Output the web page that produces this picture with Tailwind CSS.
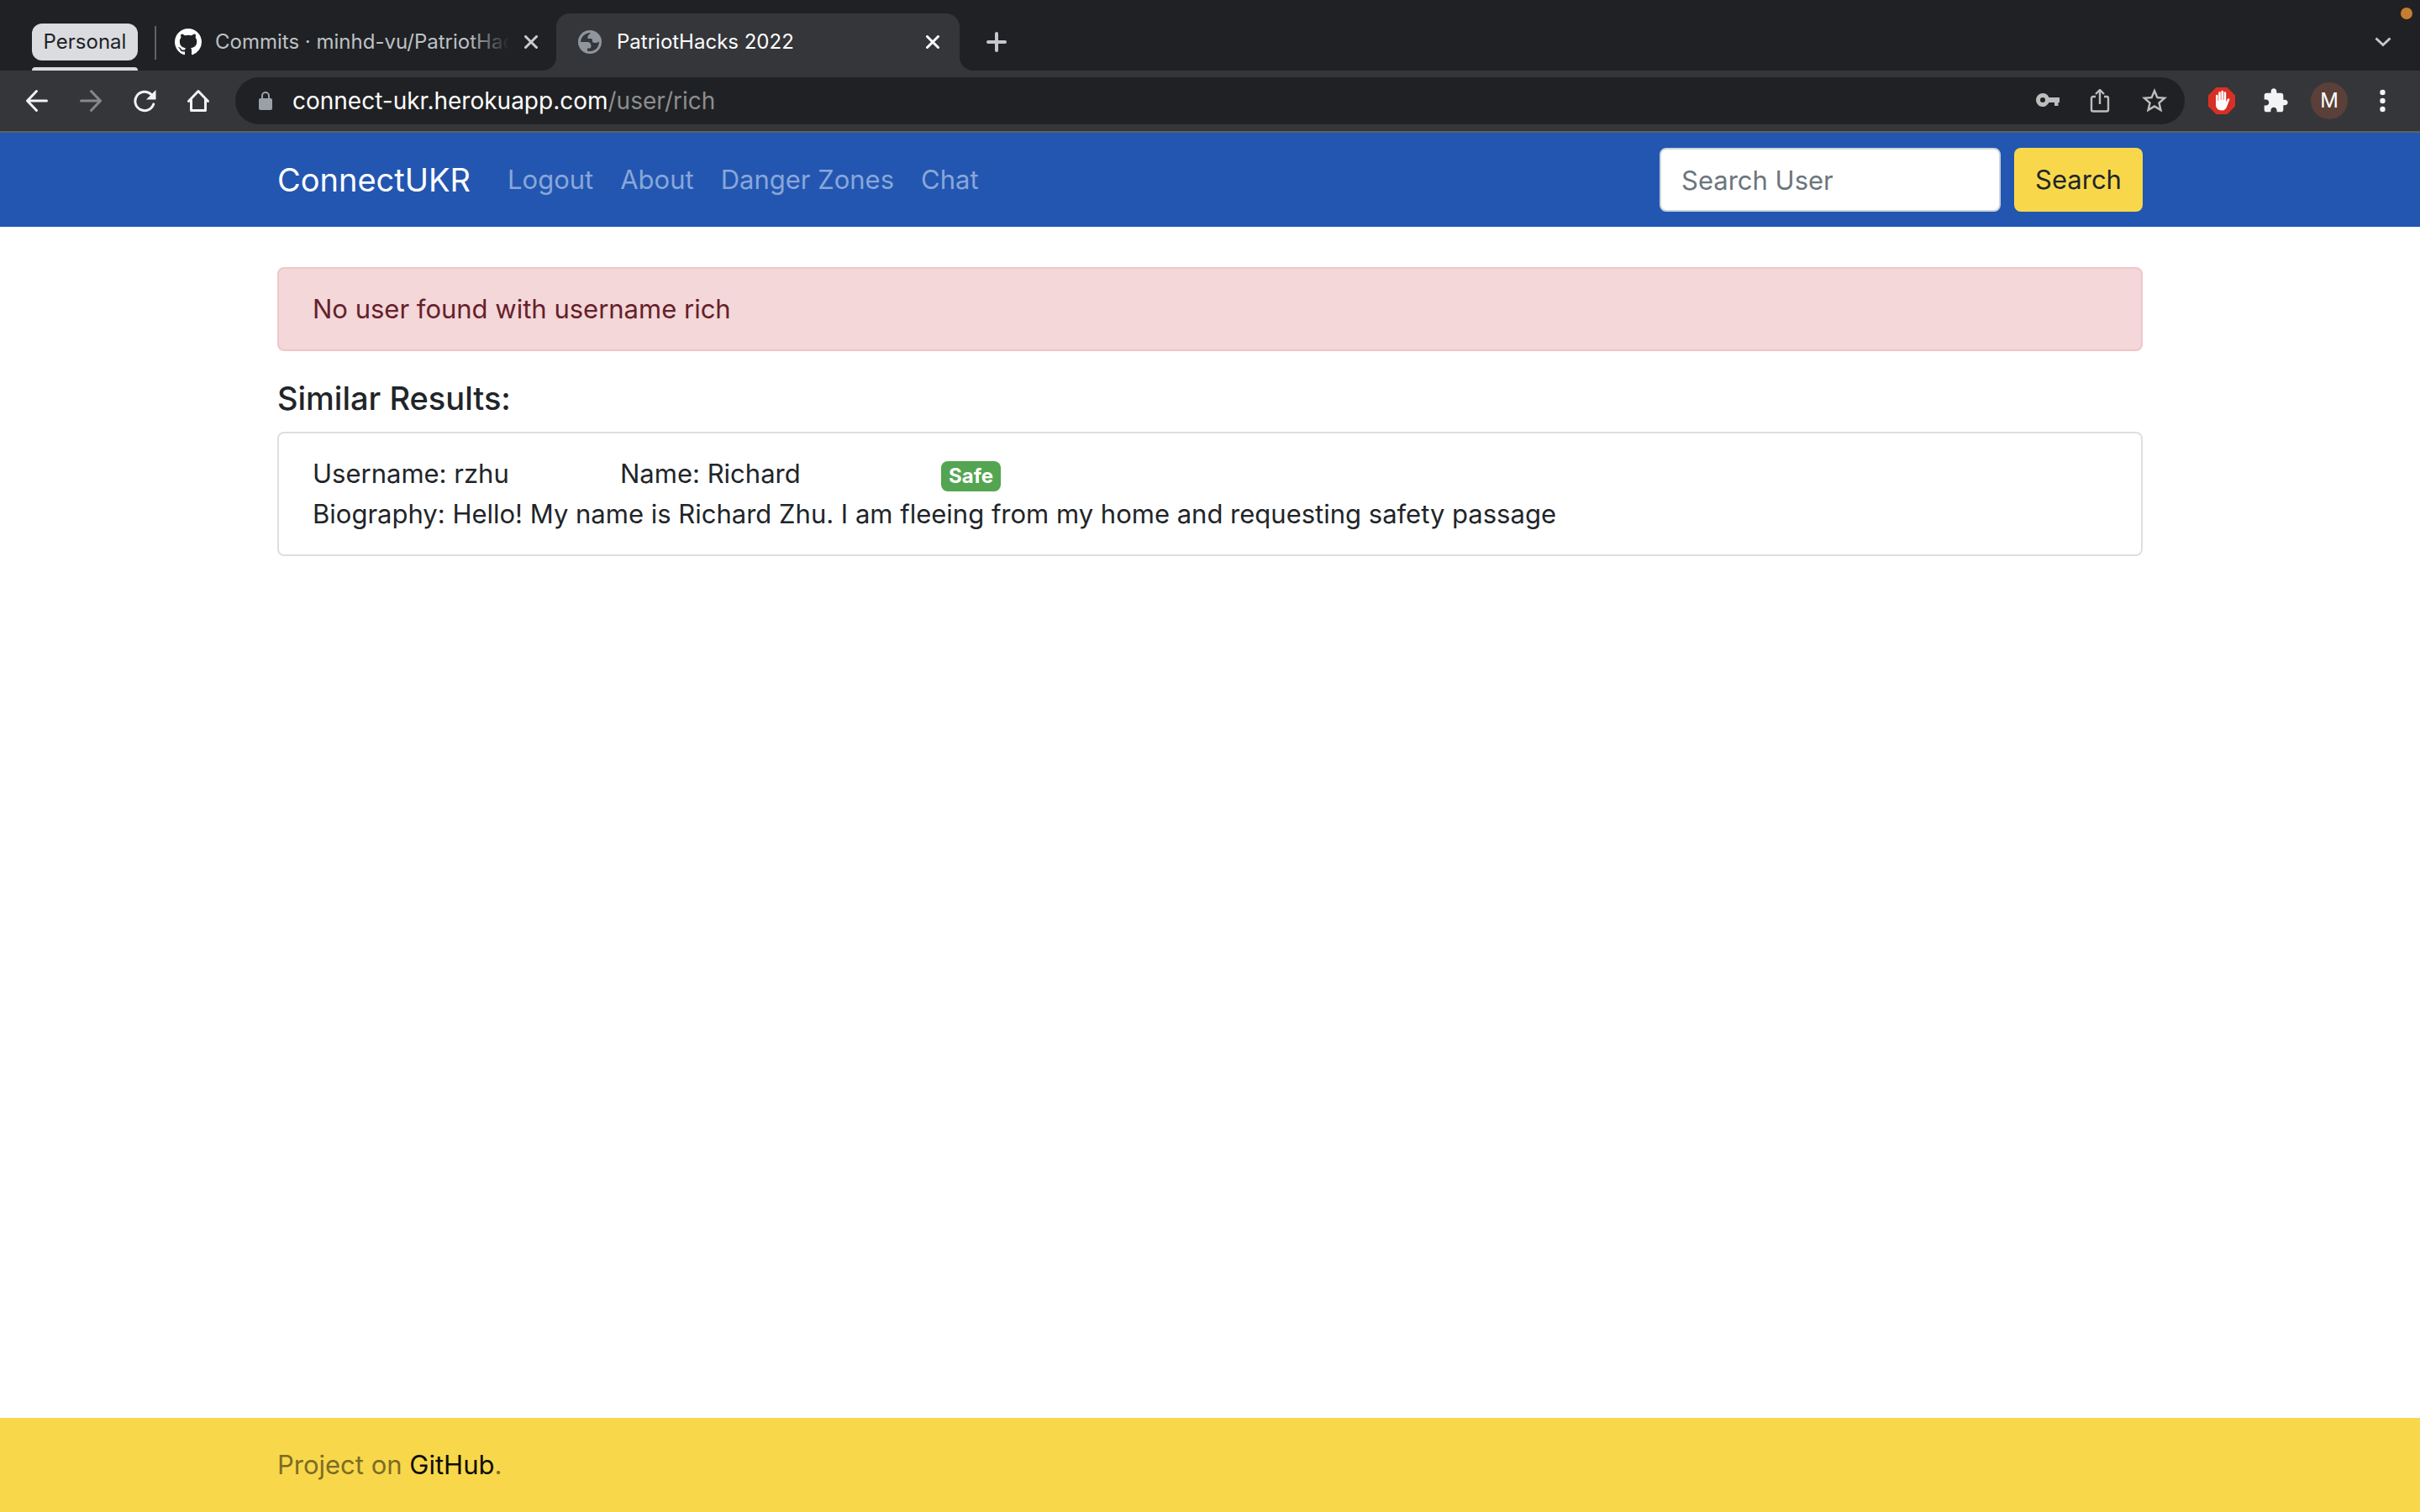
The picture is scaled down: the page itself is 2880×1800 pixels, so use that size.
<!DOCTYPE html>
<html lang="en">
<head>
    <meta charset="UTF-8">
    <meta name="viewport" content="width=device-width, initial-scale=1.0">
    <title>PatriotHacks 2022</title>
    <script src="https://cdn.jsdelivr.net/npm/@tailwindcss/browser@4"></script>
</head>
<body class="flex min-h-screen flex-col bg-white font-['Inter','Liberation_Sans',sans-serif] text-[31px] leading-[48px] text-[#212529]">

    <!-- Browser window -->
    <div class="text-[24px] leading-[32px]">

        <!-- Tab strip -->
        <div class="relative flex h-[84px] bg-[#202124]">
            <div class="ml-[38px] flex w-[126px] flex-col justify-between pt-7">
                <button class="h-11 rounded-xl bg-[#dadce0] text-[#202124]">Personal</button>
                <div class="h-1 rounded-t bg-[#dadce0]"></div>
            </div>
            <div class="ml-5 mt-[31px] h-10 w-[2px] bg-[#5f6368]"></div>

            <div class="ml-[22px] mr-[22px] flex items-center pt-4">
                <svg class="size-8 shrink-0" viewBox="0 0 16 16" fill="#fff"><path d="M8 0C3.58 0 0 3.58 0 8c0 3.54 2.29 6.53 5.47 7.59.4.07.55-.17.55-.38 0-.19-.01-.82-.01-1.49-2.01.37-2.53-.49-2.69-.94-.09-.23-.48-.94-.82-1.13-.28-.15-.68-.52-.01-.53.63-.01 1.08.58 1.23.82.72 1.21 1.87.87 2.33.66.07-.52.28-.87.51-1.07-1.78-.2-3.64-.89-3.64-3.95 0-.87.31-1.59.82-2.15-.08-.2-.36-1.02.08-2.12 0 0 .67-.21 2.2.82.64-.18 1.32-.27 2-.27s1.36.09 2 .27c1.53-1.04 2.2-.82 2.2-.82.44 1.1.16 1.92.08 2.12.51.56.82 1.27.82 2.15 0 3.07-1.87 3.75-3.65 3.95.29.25.54.73.54 1.48 0 1.07-.01 1.93-.01 2.2 0 .21.15.46.55.38A8.01 8.01 0 0 0 16 8c0-4.42-3.58-8-8-8z"/></svg>
                <span class="relative ml-4 w-[350px] overflow-hidden whitespace-nowrap text-[#bdc1c6]">Commits · minhd-vu/PatriotHac
                    <span class="absolute inset-y-0 right-0 w-12 bg-linear-to-r from-[#202124]/0 to-[#202124]"></span>
                </span>
                <button class="ml-[18px]" aria-label="Close tab">
                    <svg class="size-4" viewBox="0 0 16 16" stroke="#c9ccd0" stroke-width="3" stroke-linecap="round"><path d="M1.5 1.5l13 13M14.5 1.5l-13 13"/></svg>
                </button>
            </div>

            <div class="relative mt-4 flex w-[480px] items-center rounded-t-[16px] bg-[#35363a] pl-[26px] pr-6">
                <div class="absolute -left-4 bottom-0 size-4 bg-[#35363a]"><div class="size-4 rounded-br-[16px] bg-[#202124]"></div></div>
                <div class="absolute -right-4 bottom-0 size-4 bg-[#35363a]"><div class="size-4 rounded-bl-[16px] bg-[#202124]"></div></div>
                <svg class="size-7" viewBox="0 0 28 28"><circle cx="14" cy="14" r="14" fill="#8f959c"/><path fill="#35363a" d="M3 14C3.3 8 8 3.2 15 3C14 5 12 5 11.5 7.5V10H15.5C17 10 17 12 17 14C19 16 22 15 25 13.5C25 20 20.5 25 14 25L11 24.7V21.5H14.5C16 20 15.5 17 14.5 15.5C13.5 14 12 14 10 14Z"/></svg>
                <span class="ml-[18px] text-white">PatriotHacks 2022</span>
                <button class="ml-auto" aria-label="Close tab">
                    <svg class="size-4" viewBox="0 0 16 16" stroke="#fff" stroke-width="3" stroke-linecap="round"><path d="M1.5 1.5l13 13M14.5 1.5l-13 13"/></svg>
                </button>
            </div>

            <button class="ml-8 pt-4" aria-label="New tab">
                <svg class="size-6" viewBox="0 0 24 24" stroke="#c4c7cb" stroke-width="4" stroke-linecap="round"><path d="M12 2v20M2 12h20"/></svg>
            </button>
            <button class="ml-auto mr-[34px] pt-4" aria-label="Search tabs">
                <svg class="h-3 w-5" viewBox="0 0 20 12" fill="none" stroke="#c4c7cb" stroke-width="3"><path d="M1.5 1.5l8.5 8 8.5-8"/></svg>
            </button>
            <span class="absolute right-[9px] top-[9px] size-[14px] rounded-full bg-[#c57e30]"></span>
        </div>

        <!-- Toolbar -->
        <div class="flex h-[74px] items-center border-b-2 border-[#5f6063] bg-[#35363a] pl-[30px] pr-[41px]">
            <div class="flex items-center gap-9">
                <button aria-label="Back"><svg class="size-7" viewBox="0 0 28 28" fill="none" stroke="#f1f3f4" stroke-width="3" stroke-linecap="round" stroke-linejoin="round"><path d="M25.5 14H3M13.5 2.5L2.5 14l11 11.5"/></svg></button>
                <button aria-label="Forward"><svg class="size-7" viewBox="0 0 28 28" fill="none" stroke="#87888a" stroke-width="3" stroke-linecap="round" stroke-linejoin="round"><path d="M2.5 14H25M14.5 2.5l11 11.5-11 11.5"/></svg></button>
                <button aria-label="Reload"><svg class="size-7" viewBox="0 0 28 28"><path fill="none" stroke="#f1f3f4" stroke-width="3" stroke-linecap="round" d="M22 6.5A11.2 11.2 0 1 0 24.7 18"/><path fill="#f1f3f4" d="M27.5 1v11.5H16z"/></svg></button>
                <button aria-label="Home"><svg class="size-7" viewBox="0 0 28 28" fill="none" stroke="#f1f3f4" stroke-width="3" stroke-linecap="round" stroke-linejoin="round"><path d="M2.5 14.5L14 2.5l11.5 12M5.5 12v13.5h17V12"/></svg></button>
            </div>

            <div class="ml-[30px] flex h-14 grow items-center rounded-full bg-[#202124] pl-7 pr-[18px]">
                <svg class="h-6 w-4" viewBox="0 0 16 24"><rect y="9" width="16" height="14" rx="2" fill="#9aa0a6"/><path d="M4 10V6a4 4 0 0 1 8 0v4" fill="none" stroke="#9aa0a6" stroke-width="2"/></svg>
                <span class="ml-6 text-[28px] text-white">connect-ukr.herokuapp.com<span class="text-[#8c8d8f]">/user/rich</span></span>
                <div class="ml-auto flex items-center gap-[35px]">
                    <button aria-label="Saved passwords"><svg class="h-7 w-[30px]" viewBox="0 0 30 28" fill="#bdbdbd"><path fill-rule="evenodd" d="M9 5a8 8 0 1 0 7.4 11H23v4h4.500v-4H29v-6H16.400A8 8 0 0 0 9 5zm0 5a3 3 0 1 1 0 6 3 3 0 0 1 0-6z"/></svg></button>
                    <button aria-label="Share"><svg class="h-7 w-6" viewBox="0 0 24 28" fill="none" stroke="#bdbdbd" stroke-width="2.4"><path d="M7 9H4a2 2 0 0 0-2 2v13.500a2 2 0 0 0 2 2h16a2 2 0 0 0 2-2V11a2 2 0 0 0-2-2h-3M12 18V1.500M7 6l5-5 5 5"/></svg></button>
                    <button aria-label="Bookmark this page"><svg class="size-9" viewBox="0 0 24 24" fill="#bdbdbd"><path d="M22 9.240l-7.190-.62L12 2 9.190 8.630 2 9.240l5.460 4.730L5.820 21 12 17.270 18.180 21l-1.630-7.030L22 9.240zM12 15.400l-3.760 2.270 1-4.280-3.320-2.880 4.380-.38L12 6.100l1.710 4.040 4.380.38-3.320 2.880 1 4.280L12 15.400z"/></svg></button>
                </div>
            </div>

            <div class="ml-7 flex items-center">
                <button aria-label="AdBlock"><svg class="size-8" viewBox="0 0 32 32"><path fill="#d93025" d="M9.500 0h13L32 9.500v13L22.500 32h-13L0 22.500v-13z"/><path fill="#fff" d="M9 10a1.300 1.300 0 0 1 2.600 0v6h.6V6.500a1.300 1.300 0 0 1 2.600 0V15h.6V5a1.300 1.300 0 0 1 2.600 0v10h.6V6.500a1.300 1.300 0 0 1 2.600 0V17.500l1.600-3.500c.8-1.500 3-.8 2.500.7L22.500 22c-1 3.500-3 5.500-6.500 5.500-4.500 0-7-3-7-7z"/></svg></button>
                <button class="ml-8" aria-label="Extensions"><svg class="size-8" viewBox="0 0 24 24" fill="#f1f3f4"><path d="M20.500 11H19V7c0-1.100-.9-2-2-2h-4V3.500C13 2.120 11.880 1 10.500 1S8 2.120 8 3.500V5H4c-1.100 0-1.990.9-1.990 2v3.800H3.500c1.490 0 2.700 1.210 2.700 2.700s-1.210 2.700-2.700 2.700H2V20c0 1.100.9 2 2 2h3.800v-1.500c0-1.490 1.210-2.700 2.700-2.700 1.490 0 2.700 1.210 2.700 2.700V22H17c1.100 0 2-.9 2-2v-4h1.500c1.380 0 2.500-1.120 2.500-2.500S21.880 11 20.500 11z"/></svg></button>
                <button class="ml-[26px] size-11 rounded-full bg-[#5a4038] text-white" aria-label="Profile">M</button>
                <button class="ml-[38px]" aria-label="Menu"><svg class="h-7 w-[7px]" viewBox="0 0 7 28" fill="#f1f3f4"><circle cx="3.5" cy="4" r="3.2"/><circle cx="3.5" cy="14" r="3.2"/><circle cx="3.5" cy="24" r="3.2"/></svg></button>
            </div>
        </div>
    </div>

    <!-- Navbar -->
    <nav class="bg-[#2356b1] py-[18px]">
        <div class="mx-auto flex max-w-[2220px] items-center">
            <a href="#" class="text-[38px] text-white">ConnectUKR</a>
            <div class="ml-11 flex grow gap-8 text-[#88a7d8]">
                <a href="#">Logout</a>
                <a href="#">About</a>
                <a href="#">Danger Zones</a>
                <a href="#">Chat</a>
            </div>
            <form class="flex gap-4">
                <input type="text" aria-label="Search User" placeholder="Search User" class="h-[76px] w-[406px] rounded-lg border-2 border-[#ced4da] bg-white px-6 placeholder:text-[#6c757d]">
                <button type="button" class="h-[76px] w-[153px] rounded-lg bg-[#f8d84a]">Search</button>
            </form>
        </div>
    </nav>

    <!-- Results -->
    <main class="mx-auto w-full max-w-[2220px] grow pt-12">
        <div role="alert" class="rounded-lg border-2 border-[#efc6ca] bg-[#f3d7d9] px-10 py-6 text-[#66202a]">No user found with username rich</div>
        <h5 class="mt-8 text-[38px] font-medium">Similar Results:</h5>
        <div class="mt-4 rounded-lg border-2 border-[#dfdfdf] px-10 py-6">
            <div class="grid grid-cols-[366px_382px_auto] items-center justify-start">
                <span>Username: rzhu</span>
                <span>Name: Richard</span>
                <span class="mt-[6px] rounded-lg bg-[#53a551] px-[9px] text-[24px] leading-9 font-bold text-white">Safe</span>
            </div>
            <p>Biography: Hello! My name is Richard Zhu. I am fleeing from my home and requesting safety passage</p>
        </div>
    </main>

    <footer class="bg-[#f8d84a] py-8">
        <p class="mx-auto max-w-[2220px] text-[#7c6c25]">Project on <a href="#" class="text-[#0f0d04]">GitHub</a>.</p>
    </footer>
</body>
</html>
